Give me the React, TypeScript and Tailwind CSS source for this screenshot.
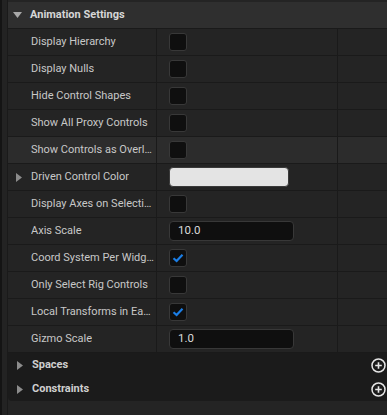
import React from "react"

type Row = {
  label: string
  kind: "check" | "color" | "number"
  checked?: boolean
  value?: string
  expandable?: boolean
  highlight?: boolean
}

const rows: Row[] = [
  { label: "Display Hierarchy", kind: "check" },
  { label: "Display Nulls", kind: "check" },
  { label: "Hide Control Shapes", kind: "check" },
  { label: "Show All Proxy Controls", kind: "check" },
  { label: "Show Controls as Overlay", kind: "check", highlight: true },
  { label: "Driven Control Color", kind: "color", expandable: true },
  { label: "Display Axes on Selection", kind: "check" },
  { label: "Axis Scale", kind: "number", value: "10.0" },
  { label: "Coord System Per Widget Mode", kind: "check", checked: true },
  { label: "Only Select Rig Controls", kind: "check" },
  { label: "Local Transforms in Each Local Space", kind: "check", checked: true },
  { label: "Gizmo Scale", kind: "number", value: "1.0" },
]

function Caret({ down = false }: { down?: boolean }) {
  if (down) {
    return (
      <svg width="9" height="6" viewBox="0 0 9 6" className="shrink-0">
        <path d="M0 0 H9 L4.5 6 Z" fill="#a8a8a8" />
      </svg>
    )
  }
  return (
    <svg width="6" height="9" viewBox="0 0 6 9" className="shrink-0">
      <path d="M0 0 V9 L6 4.5 Z" fill="#8c8c8c" />
    </svg>
  )
}

function Checkbox({ checked }: { checked?: boolean }) {
  return (
    <div className="w-[18px] h-[18px] rounded-[3px] bg-[#0f0f0f] border border-[#383838] flex items-center justify-center">
      {checked ? (
        <svg width="12" height="10" viewBox="0 0 12 10">
          <path d="M1.5 5.2 L4.6 8 L10.5 1.8" fill="none" stroke="#1b7ee6" strokeWidth="2.2" />
        </svg>
      ) : null}
    </div>
  )
}

function PlusCircle() {
  return (
    <svg width="15" height="15" viewBox="0 0 15 15">
      <circle cx="7.5" cy="7.5" r="6.5" fill="none" stroke="#e6e6e6" strokeWidth="1.5" />
      <path d="M7.5 4.2 V10.8 M4.2 7.5 H10.8" stroke="#e6e6e6" strokeWidth="1.6" />
    </svg>
  )
}

export default function App() {
  return (
    <div className="w-[387px] h-[415px] overflow-hidden bg-[#1c1c1c] flex font-['Roboto',sans-serif] text-[11px]">
      <div className="w-[2px] bg-[#141414]" />
      <div className="w-[5px] bg-[#232323]" />
      <div className="w-[1px] bg-[#1a1a1a]" />
      <div className="flex-1 flex flex-col pt-[2px] bg-[#242424]">
        {/* Header */}
        <div className="h-[27px] bg-[#2f2f2f] border-b border-[#1a1a1a] flex items-center pl-[5px] gap-[8px] text-[#d6d6d6] font-bold">
          <Caret down />
          <span>Animation Settings</span>
        </div>

        {rows.map((r) => (
          <div
            key={r.label}
            className={`h-[27px] flex border-b border-[#1a1a1a] ${r.highlight ? "bg-[#2c2c2c]" : "bg-[#242424]"}`}
          >
            <div className="w-[149px] shrink-0 flex items-center border-r border-[#1a1a1a] pl-[8px] pr-[1px]">
              <div className="w-[15px] shrink-0 flex items-center">{r.expandable ? <Caret /> : null}</div>
              <span className="truncate text-[#c8c8c8]">{r.label}</span>
            </div>
            <div className="w-[181px] shrink-0 flex items-center border-r border-[#1a1a1a] pl-[12px]">
              {r.kind === "check" && <Checkbox checked={r.checked} />}
              {r.kind === "color" && (
                <div className="w-[120px] h-[20px] rounded-[4px] bg-[#e4e4e4] border border-[#3a3a3a]" />
              )}
              {r.kind === "number" && (
                <div className="w-[125px] h-[20px] rounded-[4px] bg-[#0f0f0f] border border-[#383838] flex items-center pl-[8px] text-[#dadada] text-[11.5px]">
                  {r.value}
                </div>
              )}
            </div>
            <div className="flex-1" />
          </div>
        ))}

        {/* Collapsed sections */}
        <div className="bg-[#1b1b1b] rounded-bl-[4px]">
          {["Spaces", "Constraints"].map((s) => (
            <div key={s} className="h-[24px] flex items-center pl-[9px] pr-[1px] gap-[9px]">
              <Caret />
              <span className="flex-1 font-bold text-[#cfcfcf]">{s}</span>
              <PlusCircle />
            </div>
          ))}
        </div>
        <div className="flex-1 bg-[#242424]" />
      </div>
    </div>
  )
}
